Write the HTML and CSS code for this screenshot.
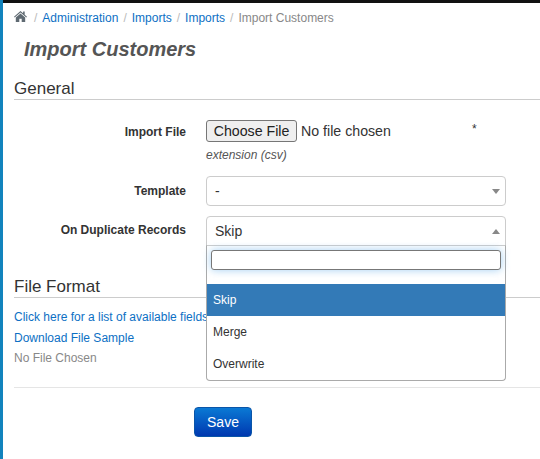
FILE: index.html
```html
<!DOCTYPE html>
<html lang="en">
<head>
    <meta charset="UTF-8">
    <title>Import Customers</title>
    <link rel="stylesheet" href="styles.css">
</head>
<body>
    <div class="topbar"></div>
    <div class="page">
        <ol class="breadcrumb">
            <li>
                <svg class="home" viewBox="0 0 26 22" width="13" height="11" aria-hidden="true">
                    <path fill="#5f6a72" d="M13 0 0 11.4l1.4 1.7L13 3l11.6 10.1 1.4-1.7-4.6-4V1.2h-3.2v3.4zM13 4.8 3.6 13v9h7v-6.6h4.8V22h7v-9z"/>
                </svg>
            </li>
            <li><a href="#">Administration</a></li>
            <li><a href="#">Imports</a></li>
            <li><a href="#">Imports</a></li>
            <li class="active">Import Customers</li>
        </ol>

        <h1>Import Customers</h1>

        <h2 class="section general">General</h2>

        <div class="row file-row">
            <label>Import File</label>
            <div class="field">
                <div class="file-line">
                    <button class="choose" type="button">Choose File</button>
                    <span class="no-file">No file chosen</span>
                    <span class="required">*</span>
                </div>
                <div class="hint">extension (csv)</div>
            </div>
        </div>

        <div class="row template-row">
            <label>Template</label>
            <div class="select">
                <span>-</span>
                <i class="caret"></i>
            </div>
        </div>

        <div class="row duplicate-row">
            <label>On Duplicate Records</label>
            <div class="select-wrap">
                <div class="select open">
                    <span>Skip</span>
                    <i class="caret up"></i>
                </div>
                <div class="dropdown">
                    <div class="search"><input type="text"></div>
                    <ul>
                        <li class="selected">Skip</li>
                        <li>Merge</li>
                        <li>Overwrite</li>
                    </ul>
                </div>
            </div>
        </div>

        <h2 class="section format">File Format</h2>
        <div class="links">
            <a href="#">Click here for a list of available fields</a>
            <a href="#">Download File Sample</a>
            <span>No File Chosen</span>
        </div>

        <hr>

        <div class="actions">
            <button class="save" type="button">Save</button>
        </div>
    </div>
</body>
</html>
```

FILE: styles.css
```css
html, body {
    margin: 0;
    height: 100%;
    overflow: hidden;
}
body {
    font-family: "Liberation Sans", Arial, sans-serif;
    font-size: 12px;
    color: #333;
    background: #fff;
    border-left: 3px solid #1283bd;
    box-sizing: border-box;
}
.topbar {
    height: 3px;
    background: #111;
    margin-left: -3px;
}
.page {
    padding-left: 11px;
}
.breadcrumb {
    display: flex;
    align-items: center;
    list-style: none;
    margin: 0;
    padding: 8px 0 0;
    height: 14px;
}
.breadcrumb li + li::before {
    content: "/";
    color: #bbb;
    padding: 0 5px;
}
.breadcrumb a {
    color: #0d70c4;
    text-decoration: none;
}
.breadcrumb .active {
    color: #888;
}
.home {
    display: block;
    margin: -3px 2px 0 0;
}
h1 {
    margin: 12px 0 0 10px;
    font-size: 20px;
    line-height: 24px;
    font-style: italic;
    font-weight: bold;
    color: #555;
}
.section {
    margin: 0;
    font-size: 17px;
    line-height: 20px;
    font-weight: normal;
    color: #333;
    border-bottom: 1px solid #ccc;
}
.general {
    margin-top: 18px;
}
.row {
    display: flex;
}
.row label {
    width: 172px;
    margin-right: 20px;
    text-align: right;
    font-weight: bold;
}
.file-row {
    margin-top: 20px;
}
.file-row label {
    padding-top: 5px;
}
.file-line {
    display: flex;
    align-items: center;
}
.choose {
    width: 91px;
    height: 22px;
    padding: 0;
    font: 14.2px "Liberation Sans", Arial, sans-serif;
    color: #222;
    background: #efefef;
    border: 1px solid #767676;
    border-radius: 3px;
}
.no-file {
    margin-left: 4px;
    width: 171px;
    font-size: 14.2px;
}
.required {
    font-size: 12px;
    margin-top: -4px;
}
.hint {
    margin-top: 6px;
    font-style: italic;
    font-size: 12px;
    color: #555;
}
.template-row {
    margin-top: 14px;
    align-items: center;
}
.duplicate-row {
    margin-top: 10px;
}
.duplicate-row label {
    padding-top: 7px;
}
.select-wrap {
    position: relative;
    width: 300px;
}
.select {
    display: flex;
    align-items: center;
    justify-content: space-between;
    box-sizing: border-box;
    width: 300px;
    height: 30px;
    padding: 0 5px 0 8px;
    font-size: 14px;
    background: #fff;
    border: 1px solid #ccc;
    border-radius: 4px;
}
.select.open {
    border-radius: 4px 4px 0 0;
}
.caret {
    width: 0;
    height: 0;
    border-left: 4px solid transparent;
    border-right: 4px solid transparent;
    border-top: 5px solid #888;
}
.caret.up {
    border-top: 0;
    border-bottom: 5px solid #888;
}
.dropdown {
    position: absolute;
    top: 29px;
    left: 0;
    z-index: 2;
    box-sizing: border-box;
    width: 300px;
    background: #fff;
    border: 1px solid #aaa;
    border-top-color: #ccc;
    border-radius: 0 0 4px 4px;
}
.search {
    padding: 4px 4px 5px;
    height: 29px;
    box-sizing: border-box;
}
.search input {
    display: block;
    box-sizing: border-box;
    width: 100%;
    height: 20px;
    border: 1px solid #777;
    border-radius: 3px;
    box-shadow: 0 0 8px rgba(102, 175, 233, 0.6);
}
.dropdown ul {
    list-style: none;
    margin: 0;
    padding: 9px 0 0;
}
.dropdown li {
    height: 32px;
    line-height: 32px;
    padding-left: 6px;
    color: #333;
}
.dropdown li.selected {
    background: #337ab7;
    color: #fff;
}
.format {
    margin-top: 31px;
}
.links {
    display: flex;
    flex-direction: column;
    gap: 6.5px;
    margin-top: 12px;
    color: #888;
}
.links a {
    color: #0d70c4;
    text-decoration: none;
}
hr {
    margin: 22px 0 0;
    border: 0;
    border-top: 1px solid #e5e5e5;
}
.actions {
    padding: 19px 0 0 180px;
}
.save {
    display: block;
    width: 58px;
    height: 30px;
    padding: 0;
    font: 14px "Liberation Sans", Arial, sans-serif;
    color: #fff;
    background: linear-gradient(to bottom, #0a79d4, #0038b0);
    border: 1px solid #0a55a8;
    border-radius: 4px;
}
```
